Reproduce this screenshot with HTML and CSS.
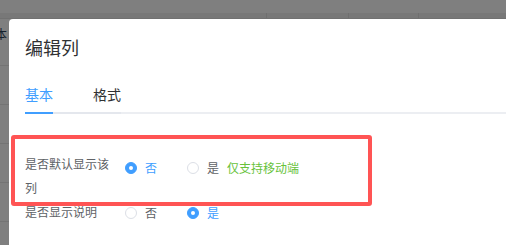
FILE: index.html
```html
<!DOCTYPE html>
<html lang="zh-CN">
<head>
    <meta charset="UTF-8">
    <title>编辑列</title>
    <link rel="stylesheet" href="styles.css">
</head>
<body>

    <div class="page">
        <div class="thead">
            <span class="th th-a"></span>
            <span class="th th-b"></span>
            <span class="th th-c"></span>
            <span class="th th-d"></span>
        </div>
        <div class="tr"><span class="cell-text">本</span></div>
        <div class="tr"></div>
        <div class="tr"></div>
        <div class="tr"></div>
        <div class="tr"></div>
    </div>

    <div class="dialog">
        <h3 class="dialog-title">编辑列</h3>

        <div class="tabs">
            <div class="tabs-nav">
                <span class="tab active">基本</span>
                <span class="tab">格式</span>
            </div>
        </div>

        <div class="form">
            <div class="field field-wrap">
                <label class="field-label">是否默认显示该列</label>
                <div class="radios">
                    <span class="radio checked"><i class="dot"></i>否</span>
                    <span class="radio"><i class="dot"></i>是</span>
                    <span class="tip">仅支持移动端</span>
                </div>
            </div>
            <div class="field">
                <label class="field-label">是否显示说明</label>
                <div class="radios">
                    <span class="radio"><i class="dot"></i>否</span>
                    <span class="radio checked"><i class="dot"></i>是</span>
                </div>
            </div>
        </div>
    </div>

    <div class="mark"></div>

</body>
</html>
```

FILE: styles.css
```css
body{
    margin: 0;
    width: 506px;
    height: 245px;
    overflow: hidden;
    position: relative;
    background: #7f7f7f;
    font-family: "Noto Sans CJK SC", "Microsoft YaHei", sans-serif;
}

/* page behind the mask */
.page{
    padding-top: 13px;
}

.thead{
    display: flex;
    height: 5px;
    background: #787878;
    border-bottom: 1px solid #717171;
}

.th{
    border-right: 1px solid #6f6f6f;
}
.th-a{ width: 266px; }
.th-b{ width: 81px; }
.th-c{ width: 69px; }
.th-d{ flex: 1; border-right: none; }

.tr{
    height: 38px;
    border-bottom: 1px solid #747474;
}
.tr:first-of-type{
    height: 33px;
}

.cell-text{
    display: block;
    margin: 8px 0 0 -5px;
    font-size: 12px;
    line-height: 14px;
    color: #15202b;
}

/* dialog */
.dialog{
    position: absolute;
    left: 9px;
    top: 19px;
    right: -10px;
    bottom: -10px;
    background: #fff;
    border-radius: 4px;
    padding: 16px 16px 0;
}

.dialog-title{
    margin: 0;
    font-size: 18px;
    font-weight: normal;
    line-height: 24px;
    color: #303133;
}

.tabs{
    margin-top: 17px;
    margin-right: -16px;
    box-shadow: inset 0 -2px 0 #eceef2;
}

.tabs-nav{
    display: inline-flex;
    border-bottom: 2px solid #e4e7ed;
}

.tab{
    padding: 0 20px;
    height: 36px;
    line-height: 36px;
    font-size: 14px;
    color: #303133;
}
.tab:first-child{ padding-left: 0; }
.tab:last-child{ padding-right: 0; }

.tab.active{
    color: #409eff;
    position: relative;
}
.tab.active::after{
    content: "";
    position: absolute;
    left: 0;
    right: 20px;
    bottom: -2px;
    height: 2px;
    background: #409eff;
}

.form{
    padding-top: 38px;
}

.field{
    display: flex;
    align-items: flex-start;
    font-size: 12px;
    line-height: 24px;
}

.field-label{
    width: 88px;
    padding-right: 12px;
    color: #606266;
}

.radios{
    display: flex;
    align-items: center;
    margin-top: 1px;
}
.field-wrap .radios{
    margin-top: 4px;
}

.radio{
    display: flex;
    align-items: center;
    margin-right: 30px;
    color: #606266;
}
.radio:last-child{ margin-right: 0; }

.dot{
    width: 10px;
    height: 10px;
    border: 1px solid #dcdfe6;
    border-radius: 50%;
    margin-right: 8px;
    background: #fff;
    position: relative;
}

.radio.checked{ color: #409eff; }
.radio.checked .dot{
    background: #409eff;
    border-color: #409eff;
}
.radio.checked .dot::after{
    content: "";
    position: absolute;
    left: 3px;
    top: 3px;
    width: 4px;
    height: 4px;
    border-radius: 50%;
    background: #fff;
}

.radio + .tip{ margin-left: -22px; }

.tip{
    color: #67c23a;
}

/* annotation frame */
.mark{
    position: absolute;
    left: 11px;
    top: 135px;
    width: 353px;
    height: 63px;
    border: 4px solid #ff5454;
    border-radius: 3px;
}
```
